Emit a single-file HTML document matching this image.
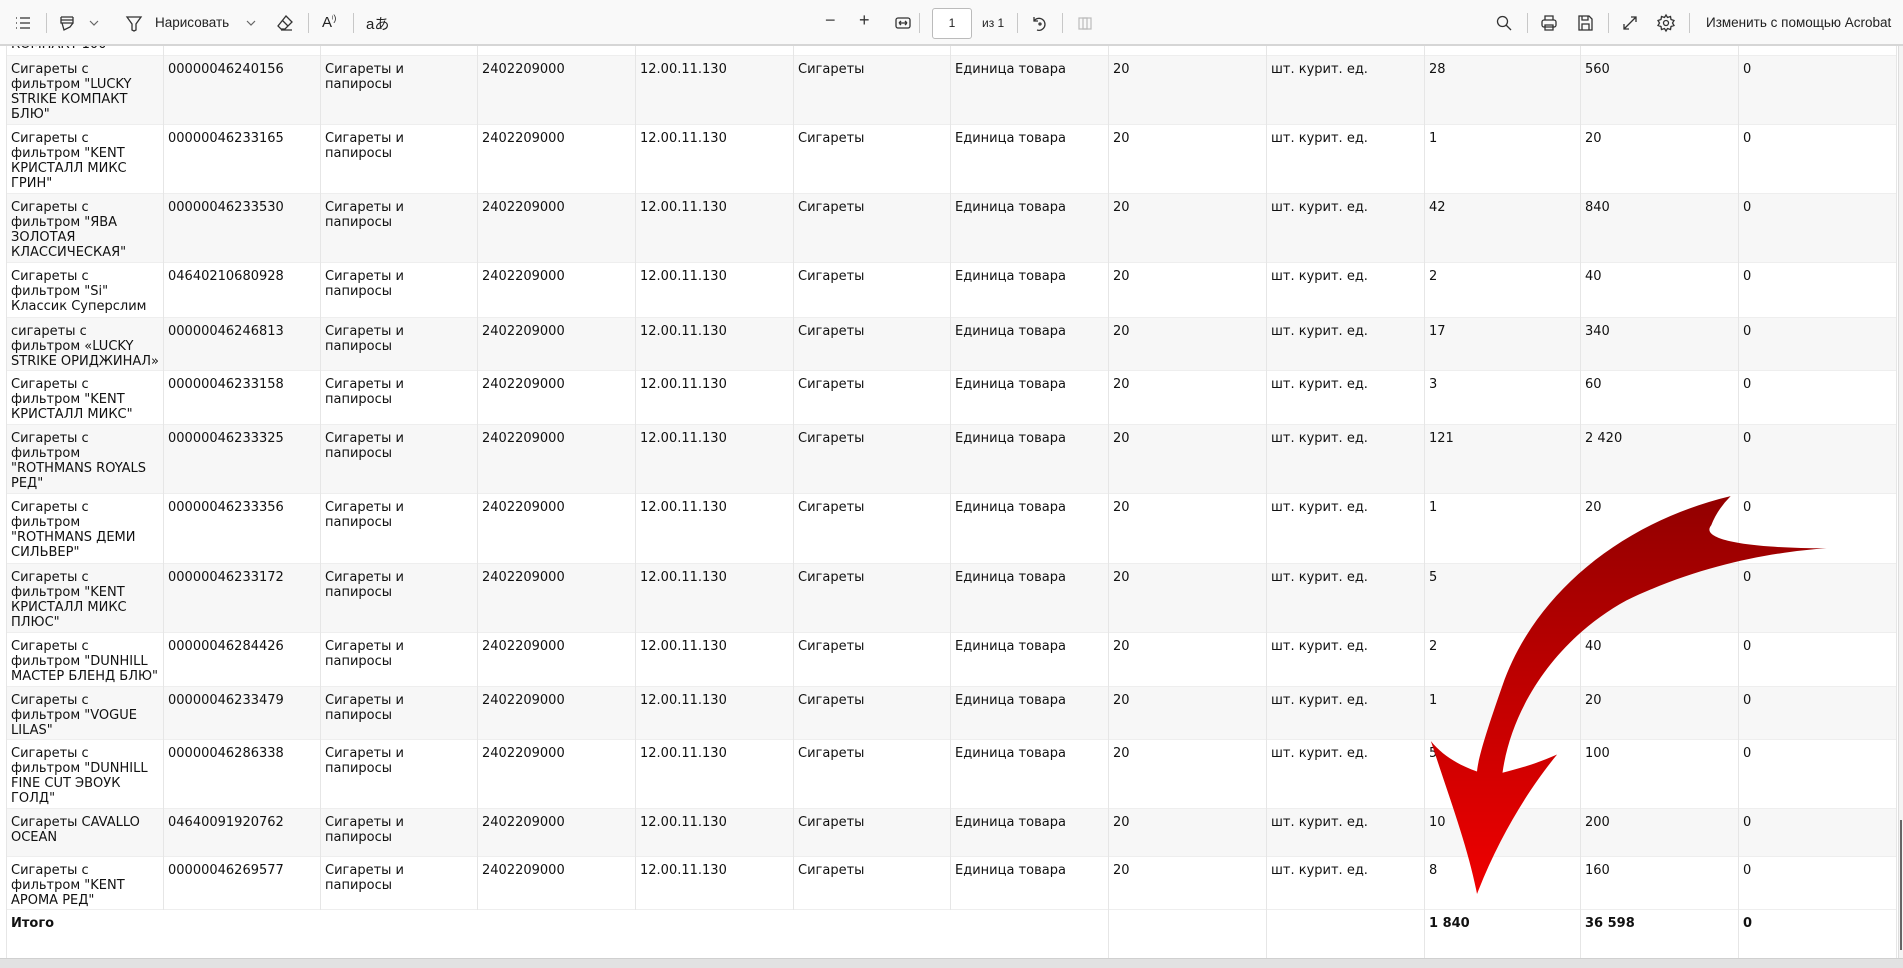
<!DOCTYPE html>
<html><head><meta charset="utf-8"><style>
*{margin:0;padding:0;box-sizing:border-box}
body{width:1903px;height:968px;overflow:hidden;background:#fff;position:relative;font-family:"DejaVu Sans","Liberation Sans",sans-serif}
.tb{position:absolute;left:0;top:0;width:1903px;height:46px;background:#f9f9f9;border-bottom:2px solid #d6d6d6;z-index:5;font-family:"Liberation Sans",sans-serif;font-size:13.5px;color:#222}
.tb>*{position:absolute}
.sep{width:1px;height:20px;top:13px;background:#c8c8c8}
.ic{top:13px;width:20px;height:20px}
table{position:absolute;left:6px;top:46px;border-collapse:collapse;table-layout:fixed;font-size:13px;line-height:15px;color:#111}
td{border-left:1px solid #e6e6e6;border-right:1px solid #e6e6e6;vertical-align:top;padding:6px 4px 0 4px;overflow:hidden}
tr:nth-child(even) td{background:#f7f7f7}
tr{border-bottom:1px solid #eeeeee}
.tot td{font-weight:bold}
.bottom{position:absolute;left:0;top:958px;width:1903px;height:10px;background:#e2e2e2;border-top:1px solid #d0d0d0}
</style></head><body>
<div class="tb">
<svg class="ic" style="left:13px" viewBox="0 0 20 20" fill="none" stroke="#333" stroke-width="1.3"><path d="M3 5h1M3 10h1M3 15h1M7 5h10M7 10h10M7 15h10"/></svg>
<div class="sep" style="left:46px"></div>
<svg class="ic" style="left:57px" viewBox="0 0 20 20" fill="none" stroke="#333" stroke-width="1.3"><path d="M4 4h12M4 4v6h12V4M5 10l2 7 6-3 3-4M4 7h12"/></svg>
<svg class="ic" style="left:84px" viewBox="0 0 20 20" fill="none" stroke="#666" stroke-width="1.2"><path d="M6 8l4 4 4-4"/></svg>
<svg class="ic" style="left:124px" viewBox="0 0 20 20" fill="none" stroke="#333" stroke-width="1.3"><path d="M3 4h14l-5 7v6l-2 1-2-1v-6z"/></svg>
<div style="left:155px;top:15px">Нарисовать</div>
<svg class="ic" style="left:241px" viewBox="0 0 20 20" fill="none" stroke="#666" stroke-width="1.2"><path d="M6 8l4 4 4-4"/></svg>
<svg class="ic" style="left:275px" viewBox="0 0 20 20" fill="none" stroke="#333" stroke-width="1.3"><path d="M11 3l6 6-7 7H6l-3-3zM7 7l6 6M6 17h11"/></svg>
<div class="sep" style="left:308px"></div>
<div style="left:322px;top:13px;font-size:15px">A<sup style="font-size:9px">ᵎ)</sup></div>
<div class="sep" style="left:353px"></div>
<div style="left:366px;top:13px;font-size:15px;font-family:'Liberation Sans','Noto Sans CJK JP',sans-serif">aあ</div>
<div style="left:825px;top:10px;font-size:18px;color:#444">−</div>
<div style="left:859px;top:10px;font-size:18px;color:#333">+</div>
<svg class="ic" style="left:893px" viewBox="0 0 20 20" fill="none" stroke="#333" stroke-width="1.3"><rect x="3" y="5" width="14" height="10" rx="2"/><path d="M6 10h8M6 10l2-2M6 10l2 2M14 10l-2-2M14 10l-2 2"/></svg>
<div class="sep" style="left:919px"></div>
<div style="left:932px;top:8px;width:40px;height:31px;border:1px solid #bbb;background:#fff;border-radius:3px;text-align:center;line-height:29px;font-size:12px">1</div>
<div style="left:982px;top:16px;font-size:12px">из 1</div>
<div class="sep" style="left:1017px"></div>
<svg class="ic" style="left:1029px" viewBox="0 0 20 20" fill="none" stroke="#333" stroke-width="1.3"><path d="M5 8a6 6 0 1 1 3 9M5 4v4h4"/><circle cx="11" cy="11" r="1"/></svg>
<div class="sep" style="left:1062px"></div>
<svg class="ic" style="left:1075px" viewBox="0 0 20 20" fill="none" stroke="#bbb" stroke-width="1.2"><rect x="4" y="5" width="8" height="11"/><rect x="8" y="5" width="8" height="11"/></svg>
<svg class="ic" style="left:1494px" viewBox="0 0 20 20" fill="none" stroke="#333" stroke-width="1.3"><circle cx="8.5" cy="8.5" r="5"/><path d="M12 12l5 5"/></svg>
<div class="sep" style="left:1527px"></div>
<svg class="ic" style="left:1539px" viewBox="0 0 20 20" fill="none" stroke="#333" stroke-width="1.3"><rect x="3" y="7" width="14" height="7" rx="2"/><path d="M6 7V3h8v4M6 12h8v5H6z"/></svg>
<svg class="ic" style="left:1575px" viewBox="0 0 20 20" fill="none" stroke="#333" stroke-width="1.3"><path d="M4 3h10l3 3v11H4zM7 3v4h6V3M7 17v-6h7v6"/></svg>
<div class="sep" style="left:1608px"></div>
<svg class="ic" style="left:1620px" viewBox="0 0 20 20" fill="none" stroke="#333" stroke-width="1.3"><path d="M4 16L16 4M11 4h5v5M4 11v5h5"/></svg>
<svg class="ic" style="left:1656px" viewBox="0 0 20 20" fill="none" stroke="#333" stroke-width="1.3"><circle cx="10" cy="10" r="2.5"/><path d="M10 2l1.5 2.5 3-1 .5 3 3 1-1.5 2.5 1.5 2.5-3 1-.5 3-3-1L10 18l-1.5-2.5-3 1-.5-3-3-1L3.5 10 2 7.5l3-1 .5-3 3 1z"/></svg>
<div class="sep" style="left:1689px"></div>
<div style="left:1706px;top:15px">Изменить с помощью Acrobat</div>
</div>

<table>
<colgroup><col style="width:157px"><col style="width:157px"><col style="width:157px"><col style="width:158px"><col style="width:158px"><col style="width:157px"><col style="width:158px"><col style="width:158px"><col style="width:158px"><col style="width:156px"><col style="width:158px"><col style="width:158px"></colgroup>
<tr style="height:9px"><td style="padding:0;position:relative;height:9px"><div style="position:absolute;top:-9px;left:4px">КОМПАКТ 100"</div></td><td></td><td></td><td></td><td></td><td></td><td></td><td></td><td></td><td></td><td></td><td></td></tr>
<tr style="height:69px"><td>Сигареты с фильтром "LUCKY STRIKE КОМПАКТ БЛЮ"</td><td>00000046240156</td><td>Сигареты и папиросы</td><td>2402209000</td><td>12.00.11.130</td><td>Сигареты</td><td>Единица товара</td><td>20</td><td>шт. курит. ед.</td><td>28</td><td>560</td><td>0</td></tr>
<tr style="height:69px"><td>Сигареты с фильтром "KENT КРИСТАЛЛ МИКС ГРИН"</td><td>00000046233165</td><td>Сигареты и папиросы</td><td>2402209000</td><td>12.00.11.130</td><td>Сигареты</td><td>Единица товара</td><td>20</td><td>шт. курит. ед.</td><td>1</td><td>20</td><td>0</td></tr>
<tr style="height:69px"><td>Сигареты с фильтром "ЯВА ЗОЛОТАЯ КЛАССИЧЕСКАЯ"</td><td>00000046233530</td><td>Сигареты и папиросы</td><td>2402209000</td><td>12.00.11.130</td><td>Сигареты</td><td>Единица товара</td><td>20</td><td>шт. курит. ед.</td><td>42</td><td>840</td><td>0</td></tr>
<tr style="height:55px"><td>Сигареты с фильтром "Si" Классик Суперслим</td><td>04640210680928</td><td>Сигареты и папиросы</td><td>2402209000</td><td>12.00.11.130</td><td>Сигареты</td><td>Единица товара</td><td>20</td><td>шт. курит. ед.</td><td>2</td><td>40</td><td>0</td></tr>
<tr style="height:53px"><td>сигареты с фильтром «LUCKY STRIKE ОРИДЖИНАЛ»</td><td>00000046246813</td><td>Сигареты и папиросы</td><td>2402209000</td><td>12.00.11.130</td><td>Сигареты</td><td>Единица товара</td><td>20</td><td>шт. курит. ед.</td><td>17</td><td>340</td><td>0</td></tr>
<tr style="height:54px"><td>Сигареты с фильтром "KENT КРИСТАЛЛ МИКС"</td><td>00000046233158</td><td>Сигареты и папиросы</td><td>2402209000</td><td>12.00.11.130</td><td>Сигареты</td><td>Единица товара</td><td>20</td><td>шт. курит. ед.</td><td>3</td><td>60</td><td>0</td></tr>
<tr style="height:69px"><td>Сигареты с фильтром "ROTHMANS ROYALS РЕД"</td><td>00000046233325</td><td>Сигареты и папиросы</td><td>2402209000</td><td>12.00.11.130</td><td>Сигареты</td><td>Единица товара</td><td>20</td><td>шт. курит. ед.</td><td>121</td><td>2 420</td><td>0</td></tr>
<tr style="height:70px"><td>Сигареты с фильтром "ROTHMANS ДЕМИ СИЛЬВЕР"</td><td>00000046233356</td><td>Сигареты и папиросы</td><td>2402209000</td><td>12.00.11.130</td><td>Сигареты</td><td>Единица товара</td><td>20</td><td>шт. курит. ед.</td><td>1</td><td>20</td><td>0</td></tr>
<tr style="height:69px"><td>Сигареты с фильтром "KENT КРИСТАЛЛ МИКС ПЛЮС"</td><td>00000046233172</td><td>Сигареты и папиросы</td><td>2402209000</td><td>12.00.11.130</td><td>Сигареты</td><td>Единица товара</td><td>20</td><td>шт. курит. ед.</td><td>5</td><td></td><td>0</td></tr>
<tr style="height:54px"><td>Сигареты с фильтром "DUNHILL МАСТЕР БЛЕНД БЛЮ"</td><td>00000046284426</td><td>Сигареты и папиросы</td><td>2402209000</td><td>12.00.11.130</td><td>Сигареты</td><td>Единица товара</td><td>20</td><td>шт. курит. ед.</td><td>2</td><td>40</td><td>0</td></tr>
<tr style="height:53px"><td>Сигареты с фильтром "VOGUE LILAS"</td><td>00000046233479</td><td>Сигареты и папиросы</td><td>2402209000</td><td>12.00.11.130</td><td>Сигареты</td><td>Единица товара</td><td>20</td><td>шт. курит. ед.</td><td>1</td><td>20</td><td>0</td></tr>
<tr style="height:69px"><td>Сигареты с фильтром "DUNHILL FINE CUT ЭВОУК ГОЛД"</td><td>00000046286338</td><td>Сигареты и папиросы</td><td>2402209000</td><td>12.00.11.130</td><td>Сигареты</td><td>Единица товара</td><td>20</td><td>шт. курит. ед.</td><td>5</td><td>100</td><td>0</td></tr>
<tr style="height:48px"><td>Сигареты CAVALLO OCEAN</td><td>04640091920762</td><td>Сигареты и папиросы</td><td>2402209000</td><td>12.00.11.130</td><td>Сигареты</td><td>Единица товара</td><td>20</td><td>шт. курит. ед.</td><td>10</td><td>200</td><td>0</td></tr>
<tr style="height:53px"><td>Сигареты с фильтром "KENT АРОМА РЕД"</td><td>00000046269577</td><td>Сигареты и папиросы</td><td>2402209000</td><td>12.00.11.130</td><td>Сигареты</td><td>Единица товара</td><td>20</td><td>шт. курит. ед.</td><td>8</td><td>160</td><td>0</td></tr>
<tr class="tot" style="height:49px;background:#fff"><td colspan="7" style="background:#fff">Итого</td><td style="background:#fff"></td><td style="background:#fff"></td><td style="background:#fff">1 840</td><td style="background:#fff">36 598</td><td style="background:#fff">0</td></tr>
</table>
<div class="bottom"></div>
<div style="position:absolute;left:1898px;top:46px;width:5px;height:912px;background:#f4f4f4;border-left:1px solid #ddd"></div>
<div style="position:absolute;left:1900px;top:820px;width:2px;height:130px;background:#666"></div>

<svg style="position:absolute;left:0;top:0;z-index:10" width="1903" height="968" viewBox="0 0 1568 798" preserveAspectRatio="none">
<defs><linearGradient id="g" x1="0" y1="0" x2="0" y2="1"><stop offset="0" stop-color="#920000"/><stop offset="1" stop-color="#f00000"/></linearGradient></defs>
<path fill="url(#g)" d="M1426,409 C1330,432 1262,495 1238,565 C1224,605 1218,625 1217,636 C1200,630 1188,622 1179,611 C1195,660 1210,700 1217,737 C1235,690 1260,650 1283,622 C1265,630 1250,634 1238,637 C1246,580 1285,525 1340,495 C1400,466 1460,455 1505,452 C1440,452 1400,445 1410,433 Q1415,420 1426,409 Z"/>
</svg>
</body></html>
